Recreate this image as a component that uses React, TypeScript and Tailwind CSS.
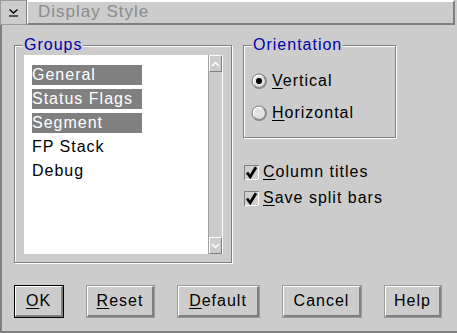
import { ReactNode } from 'react'

const groups = [
  { name: 'General', selected: true },
  { name: 'Status Flags', selected: true },
  { name: 'Segment', selected: true },
  { name: 'FP Stack', selected: false },
  { name: 'Debug', selected: false },
]

const GroupBox = ({ label, className, children }: { label: string; className: string; children: ReactNode }) => (
  <div
    className={`relative border border-[#808080] shadow-[1px_1px_0_#ffffff,inset_1px_1px_0_#ffffff] ${className}`}
  >
    <span className="absolute left-[8px] -top-[11px] px-[1px] bg-[#cccccc] text-[#0000aa] leading-[20px]">
      {label}
    </span>
    {children}
  </div>
)

const Radio = ({ checked }: { checked: boolean }) => (
  <svg width="16" height="16" viewBox="0 0 16 16">
    <circle cx="8" cy="8" r="7" fill="#e2e2e2" stroke="#7a7a7a" strokeWidth="1" />
    <path d="M13 3.5 A6 6 0 0 1 3.5 13" fill="none" stroke="#8a8a8a" strokeWidth="2" />
    <path d="M3.2 10 A5 5 0 0 1 10 3.2" fill="none" stroke="#ffffff" strokeWidth="1.2" />
    {checked && <circle cx="8" cy="8" r="3" fill="#000000" />}
  </svg>
)

const Check = () => (
  <svg width="15" height="15" viewBox="0 0 15 15">
    <rect x="0.5" y="0.5" width="14" height="14" fill="#d0d0d0" stroke="#808080" />
    <path d="M1 14.5 H14.5 V1" fill="none" stroke="#ffffff" />
    <path d="M3 7.5 L6.2 11.8 L12 2.2" fill="none" stroke="#000000" strokeWidth="2.8" />
  </svg>
)

const Mn = ({ children }: { children: ReactNode }) => <span className="underline underline-offset-[2px]">{children}</span>

const Button = ({ w, def, children }: { w: string; def?: boolean; children: ReactNode }) => (
  <div className={`${w} h-[33px] ${def ? 'border border-black' : 'border border-[#9a9a9a]'}`}>
    <div className="h-full flex items-center justify-center border-t border-l border-white border-r-2 border-b-2 border-r-[#808080] border-b-[#808080] text-black leading-[20px]">
      {children}
    </div>
  </div>
)

const App = () => {
  return (
    <div
      className="w-[457px] h-[333px] bg-[#cccccc] flex flex-col overflow-hidden text-[16px] tracking-[1px]"
      style={{ fontFamily: '"Liberation Sans", Arial, sans-serif' }}
    >
      <div className="flex h-[25px]">
        <div className="w-[27px] h-[25px] border border-[#9a9a9a] border-r-[#808080] flex items-center justify-center">
          <svg width="11" height="9" viewBox="0 0 11 9">
            <path d="M1.5 1.5 L5.5 5 L9.5 1.5" fill="none" stroke="#000" strokeWidth="1.4" />
            <path d="M1 8 H10" stroke="#000" strokeWidth="1.2" />
          </svg>
        </div>
        <div className="w-[428px] h-[25px] border-t-2 border-t-white border-l border-l-white border-r-2 border-r-[#808080] border-b-2 border-b-[#808080] pl-[10px] text-[#8c8c8c] text-[17px] leading-[20px]">
          Display Style
        </div>
      </div>

      <div className="flex-1 flex flex-col border-l-2 border-b-2 border-[#808080]">
        <div className="flex pt-[20px] pl-[12px]">
          <GroupBox label="Groups" className="w-[218px] h-[218px] pt-[9px] pl-[9px]">
            <div className="flex w-[199px] h-[199px]">
              <div className="w-[184px] h-full bg-white pt-[10px] pl-[8px] flex flex-col gap-[4px]">
                {groups.map((g) => (
                  <div
                    key={g.name}
                    className={`w-[110px] h-[20px] leading-[20px] whitespace-nowrap ${
                      g.selected ? 'bg-[#808080] text-white' : 'text-black'
                    }`}
                  >
                    {g.name}
                  </div>
                ))}
              </div>
              <div className="w-[15px] h-full border-l border-[#a0a0a0] border-r border-r-white flex flex-col justify-between bg-[#cccccc]">
                <div className="h-[17px] border-t border-l border-white border-r border-b border-r-[#808080] border-b-[#808080] flex items-center justify-center">
                  <svg width="9" height="6" viewBox="0 0 9 6">
                    <path d="M1 5 L4.5 1.5 L8 5" fill="none" stroke="#ffffff" strokeWidth="1.5" />
                  </svg>
                </div>
                <div className="h-[17px] border-t border-l border-white border-r border-b border-r-[#808080] border-b-[#808080] flex items-center justify-center">
                  <svg width="9" height="6" viewBox="0 0 9 6">
                    <path d="M1 1 L4.5 4.5 L8 1" fill="none" stroke="#ffffff" strokeWidth="1.5" />
                  </svg>
                </div>
              </div>
            </div>
          </GroupBox>

          <div className="ml-[11px] flex flex-col">
            <GroupBox label="Orientation" className="w-[153px] h-[93px] pt-[25px] pl-[7px]">
              <div className="flex flex-col gap-[12px]">
                <div className="flex items-center h-[20px] gap-[5px] text-black">
                  <Radio checked />
                  <span>
                    <Mn>V</Mn>ertical
                  </span>
                </div>
                <div className="flex items-center h-[20px] gap-[5px] text-black">
                  <Radio checked={false} />
                  <span>
                    <Mn>H</Mn>orizontal
                  </span>
                </div>
              </div>
            </GroupBox>
            <div className="mt-[24px] pl-[1px] flex flex-col gap-[6px] text-black">
              <div className="flex items-center h-[20px] gap-[4px]">
                <Check />
                <span>
                  <Mn>C</Mn>olumn titles
                </span>
              </div>
              <div className="flex items-center h-[20px] gap-[4px]">
                <Check />
                <span>
                  <Mn>S</Mn>ave split bars
                </span>
              </div>
            </div>
          </div>
        </div>

        <div className="flex mt-[22px] pl-[12px] gap-[22px]">
          <Button w="w-[50px]" def>
            <Mn>O</Mn>K
          </Button>
          <Button w="w-[69px]">
            <Mn>R</Mn>eset
          </Button>
          <Button w="w-[83px]">
            <Mn>D</Mn>efault
          </Button>
          <Button w="w-[80px]">Cancel</Button>
          <Button w="w-[58px]">Help</Button>
        </div>
      </div>
    </div>
  )
}

export default App
